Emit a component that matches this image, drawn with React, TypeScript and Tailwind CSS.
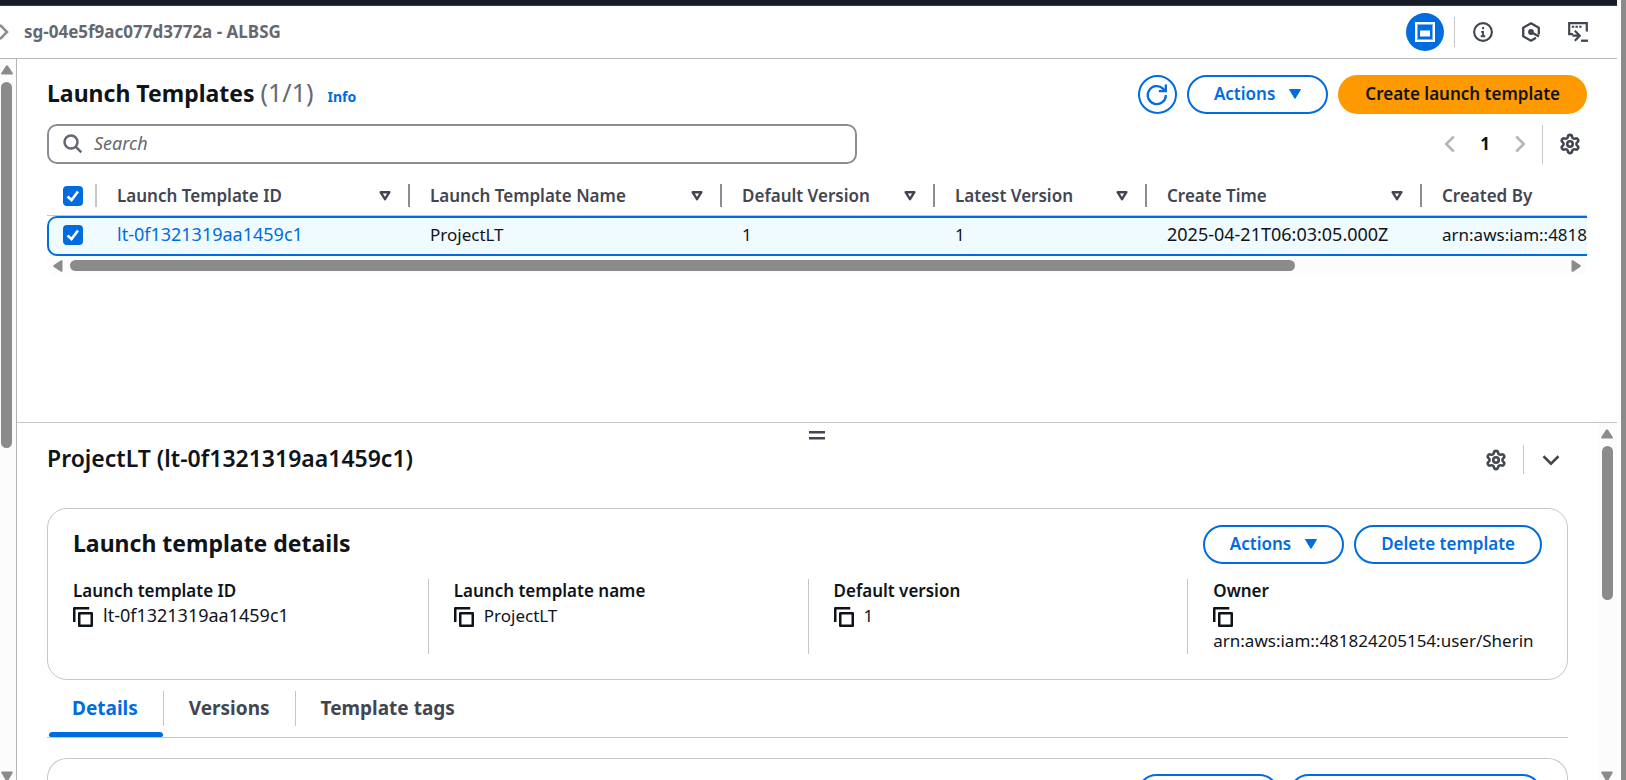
import type { ReactNode } from 'react';
import { Settings } from 'lucide-react';

function Caret() {
  return (
    <svg width="12" height="10" viewBox="0 0 12 10" aria-hidden="true">
      <path d="M0.5 0.5h11L6 9.5z" fill="currentColor" stroke="currentColor" strokeLinejoin="round" />
    </svg>
  );
}

function SortIcon() {
  return (
    <svg width="12" height="10" viewBox="0 0 12 10" fill="none" aria-hidden="true">
      <path d="M1.6 1.2h8.8L6 8.2z" stroke="#424650" strokeWidth="2.4" strokeLinejoin="round" />
    </svg>
  );
}

function CopyIcon() {
  return (
    <svg width="20" height="20" viewBox="0 0 16 16" fill="none" stroke="#0f141a" strokeWidth="2" aria-hidden="true">
      <path d="M1 12V1h12" strokeLinejoin="round" />
      <rect x="5" y="5" width="10" height="10" strokeLinejoin="round" />
    </svg>
  );
}

function Chevron({ d }: { d: string }) {
  return (
    <svg width="20" height="20" viewBox="0 0 16 16" fill="none" stroke="currentColor" strokeWidth="2" aria-hidden="true">
      <path d={d} />
    </svg>
  );
}

function GearButton({ label }: { label: string }) {
  return (
    <button aria-label={label} className="text-[#424650]">
      <Settings size={22} strokeWidth={2.8} />
    </button>
  );
}

function PillButton({ children }: { children: ReactNode }) {
  return (
    <button className="flex h-[39px] items-center gap-[14px] rounded-full border-2 border-[#006ce0] bg-white px-[25px] pb-[2px] text-[17px] font-semibold whitespace-nowrap text-[#006ce0]">
      {children}
    </button>
  );
}

function Checkbox({ label }: { label: string }) {
  return (
    <label className="grid size-5">
      <input
        type="checkbox"
        defaultChecked
        aria-label={label}
        className="col-start-1 row-start-1 size-5 appearance-none rounded-[4px] bg-[#006ce0]"
      />
      <svg className="pointer-events-none col-start-1 row-start-1" width="20" height="20" viewBox="0 0 20 20" fill="none" aria-hidden="true">
        <path d="M4.5 10.5l4 3.5L15 5.5" stroke="#fff" strokeWidth="2.6" />
      </svg>
    </label>
  );
}

function VerticalScrollbar({ thumb, className }: { thumb: string; className: string }) {
  return (
    <div aria-hidden="true" className={`flex shrink-0 flex-col items-center bg-[#fcfcfc] pt-[6px] ${className}`}>
      <svg width="12" height="10" viewBox="0 0 12 10" fill="#8b8b8b" className="shrink-0">
        <path d="M5 .8q1-1.2 2 0L11.7 8q.5 1.5-1 1.5H1.3Q-.2 9.5 .3 8z" />
      </svg>
      <div className={`mt-[7px] w-[11px] shrink-0 rounded-full bg-[#8b8b8b] ${thumb}`} />
      <svg width="12" height="9" viewBox="0 0 12 9" fill="#8b8b8b" className="mt-auto shrink-0">
        <path d="M.3 1.8Q0 .5 1.3 .5h9.4q1.3 0 1 1.3L7.5 9h-3z" />
      </svg>
    </div>
  );
}

const columns = [
  { name: 'Launch Template ID', width: 'w-[313px]' },
  { name: 'Launch Template Name', width: 'w-[312px]' },
  { name: 'Default Version', width: 'w-[213px]' },
  { name: 'Latest Version', width: 'w-[212px]' },
  { name: 'Create Time', width: 'w-[275px]' },
  { name: 'Created By', width: 'w-[504px]' },
];

const cell = 'border-y-2 border-[#006ce0] bg-[#f0fbff] pb-[3px] pl-5 text-left whitespace-nowrap';

function TemplatesTable() {
  return (
    <div className="mt-3 overflow-hidden">
      <table className="w-[1879px] table-fixed border-separate border-spacing-0 text-[17px]">
        <thead>
          <tr className="h-10 text-[#424650]">
            <th className="w-[50px] border-b border-[#c6c6cd] p-0">
              <div className="flex items-center justify-between pl-4">
                <Checkbox label="Select all launch templates" />
                <span className="h-[23px] w-[2px] bg-[#c6c6cd]" />
              </div>
            </th>
            {columns.map((c) => (
              <th key={c.name} className={`border-b border-[#c6c6cd] p-0 font-semibold ${c.width}`}>
                <div className="flex items-center pl-5">
                  <span className="flex-1 text-left">{c.name}</span>
                  <SortIcon />
                  <span className="ml-[17px] h-[23px] w-[2px] bg-[#8c8c94]" />
                </div>
              </th>
            ))}
          </tr>
        </thead>
        <tbody>
          <tr className="h-10">
            <td className="rounded-l-[10px] border-y-2 border-l-2 border-[#006ce0] bg-[#f0fbff] p-0 pb-[2px] pl-[14px]">
              <Checkbox label="Select ProjectLT" />
            </td>
            <td className={`${cell} text-[18px]`}>
              <a href="#lt-0f1321319aa1459c1" className="text-[#006ce0]">lt-0f1321319aa1459c1</a>
            </td>
            <td className={cell}>ProjectLT</td>
            <td className={cell}>1</td>
            <td className={cell}>1</td>
            <td className={`${cell} text-[18px]`}>2025-04-21T06:03:05.000Z</td>
            <td className={cell}>arn:aws:iam::481824205154:user/Sherin</td>
          </tr>
        </tbody>
      </table>
      <div aria-hidden="true" className="flex h-[19px] items-center rounded-b-[10px] bg-[#fcfcfc] px-[6px]">
        <svg width="10" height="12" viewBox="0 0 10 12" fill="#8b8b8b">
          <path d="M.8 5q-1.2 1 0 2L8 11.7q1.5.5 1.5-1V1.3Q9.5-.2 8 .3z" />
        </svg>
        <div className="mx-[7px] flex-1">
          <div className="h-[11px] w-[82%] rounded-full bg-[#8b8b8b]" />
        </div>
        <svg width="10" height="12" viewBox="0 0 10 12" fill="#8b8b8b">
          <path d="M9.2 5q1.2 1 0 2L2 11.7q-1.5.5-1.5-1V1.3Q.5-.2 2 .3z" />
        </svg>
      </div>
    </div>
  );
}

function Breadcrumbs() {
  return (
    <header className="flex h-[53px] shrink-0 items-center justify-between border-b border-[#b4b4bb] pr-[29px]">
      <div className="flex items-center gap-[10px] text-[17px] font-bold text-[#656871]">
        <svg width="14" height="20" viewBox="0 0 14 20" fill="none" stroke="#8c8c94" strokeWidth="2.5" aria-hidden="true">
          <path d="M0 3l7 7-7 7" />
        </svg>
        <span>sg-04e5f9ac077d3772a - ALBSG</span>
      </div>
      <div className="flex items-center text-[#424650]">
        <button aria-label="Split panel" className="grid size-[38px] place-items-center rounded-full bg-[#006ce0]">
          <svg width="20" height="20" viewBox="0 0 20 20" fill="none" aria-hidden="true">
            <rect x="1" y="1" width="18" height="18" stroke="#fff" strokeWidth="2" />
            <rect x="2.5" y="2.5" width="15" height="15" stroke="#7db5f3" />
            <rect x="5" y="8.5" width="10" height="6" fill="#fff" />
          </svg>
        </button>
        <span className="ml-[10px] h-[30px] w-px bg-[#c6c6cd]" />
        <button aria-label="Info panel" className="ml-[18px]">
          <svg width="20" height="20" viewBox="0 0 16 16" fill="none" stroke="currentColor" aria-hidden="true">
            <circle cx="8" cy="8" r="7.1" strokeWidth="1.7" />
            <path d="M8 4v1.7M8 7.2V12M6.5 7.9H8M6.2 11.4h3.6" strokeWidth="1.5" />
          </svg>
        </button>
        <button aria-label="Diagnostics" className="ml-7">
          <svg width="20" height="20" viewBox="0 0 20 20" fill="none" stroke="currentColor" aria-hidden="true">
            <path d="M17.800 12.500V5.700L10 1.300 2.200 5.700v8.600L10 18.700l5-2.900" strokeWidth="2.300" strokeLinejoin="round" />
            <circle cx="10" cy="10" r="2.900" fill="currentColor" stroke="none" />
            <path d="M10 10l8 4.600" strokeWidth="2.300" />
          </svg>
        </button>
        <button aria-label="CloudShell" className="ml-[27px]">
          <svg width="20" height="20" viewBox="0 0 20 20" fill="none" stroke="currentColor" aria-hidden="true">
            <path d="M18.800 9.500V1.200H1.200v11H5M4.500 13.700h7M6.800 8.700l4.900 5-4.900 5" strokeWidth="2.200" />
            <path d="M3.800 4.800h2.400M7.500 4.800h2.400M11.200 4.800h2.400" strokeWidth="2" />
            <path d="M13 18.700h7" strokeWidth="2.300" />
          </svg>
        </button>
      </div>
    </header>
  );
}

function Field({ label, value, size, first }: { label: string; value: string; size: string; first?: boolean }) {
  return (
    <div className={`min-h-[75px] px-[25px] ${first ? '' : 'border-l border-[#c6c6cd]'}`}>
      <dt className="text-[17px] leading-6 font-semibold">{label}</dt>
      <dd className={`flex flex-wrap items-center gap-x-[10px] leading-[25px] ${size}`}>
        <button aria-label={`Copy ${label}`} className="flex h-[25px] items-center pt-[3px]">
          <CopyIcon />
        </button>
        <span>{value}</span>
      </dd>
    </div>
  );
}

const tabs = ['Details', 'Versions', 'Template tags'];

function DetailsPanel() {
  return (
    <section className="flex min-h-0 flex-1">
      <div className="min-w-0 flex-1 overflow-hidden pl-[30px]">
        <div className="flex h-[18px] justify-center pt-2">
          <svg width="16" height="10" viewBox="0 0 16 10" aria-label="Resize panel" className="mr-[11px]">
            <path d="M0 1.300h16M0 7.300h16" stroke="#424650" strokeWidth="2.400" />
          </svg>
        </div>
        <div className="flex h-[37px] items-center justify-between pr-[37px]">
          <h2 className="pb-[2px] text-[23px] font-semibold">ProjectLT (lt-0f1321319aa1459c1)</h2>
          <div className="flex items-center text-[#424650]">
            <GearButton label="Panel preferences" />
            <span className="ml-4 h-[29px] w-px bg-[#c6c6cd]" />
            <button aria-label="Close panel" className="ml-[17px]">
              <Chevron d="M2 5l6 6 6-6" />
            </button>
          </div>
        </div>
        <div className="mt-[30px] mr-[30px]">
          <div className="rounded-[20px] border border-[#c6c6cd] pt-4 pb-[25px]">
            <div className="flex items-center justify-between px-[25px]">
              <h3 className="pb-[3px] text-[23px] font-bold">Launch template details</h3>
              <div className="flex gap-[10px]">
                <PillButton>Actions <Caret /></PillButton>
                <PillButton>Delete template</PillButton>
              </div>
            </div>
            <dl className="mt-[15px] grid grid-cols-4">
              <Field first label="Launch template ID" value="lt-0f1321319aa1459c1" size="text-[18px]" />
              <Field label="Launch template name" value="ProjectLT" size="text-[17px]" />
              <Field label="Default version" value="1" size="text-[17px]" />
              <Field label="Owner" value="arn:aws:iam::481824205154:user/Sherin" size="text-[17px]" />
            </dl>
          </div>
          <div role="tablist" className="flex border-b border-[#c6c6cd] pt-[11px] text-[19px] font-bold text-[#424650]">
            {tabs.map((t, i) => (
              <button key={t} role="tab" aria-selected={i === 0} className={i === 0 ? 'text-[#006ce0]' : ''}>
                <span className={`flex h-[35px] items-center px-[25px] pb-px ${i < 2 ? 'border-r border-[#c6c6cd]' : ''}`}>{t}</span>
                <span className={`mt-[6px] mr-px ml-[2px] block h-[5px] rounded-t-[4px] rounded-b-[2px] ${i === 0 ? 'bg-[#006ce0]' : ''}`} />
              </button>
            ))}
          </div>
          <div className="mt-5 flex justify-end gap-[10px] rounded-t-[20px] border border-b-0 border-[#c6c6cd] px-[25px] pt-[15px]">
            <PillButton>Actions <Caret /></PillButton>
            <PillButton>Delete template version</PillButton>
          </div>
        </div>
      </div>
      <VerticalScrollbar className="w-[19px] pr-px" thumb="h-[154px]" />
    </section>
  );
}

export default function App() {
  return (
    <div className="flex h-screen overflow-hidden bg-white font-['Noto_Sans','Open_Sans',sans-serif] text-[#0f141a]">
      <div className="flex min-w-0 flex-1 flex-col">
        <div className="h-[6px] shrink-0 border-b border-[#413b4d] bg-[#161d26]" />
        <Breadcrumbs />
        <div className="flex min-h-0 flex-1">
          <VerticalScrollbar className="w-[17px] border-r border-[#b4b4bb] pr-[3px]" thumb="h-[366px]" />
          <main className="flex min-w-0 flex-1 flex-col">
            <section className="h-[364px] shrink-0 border-b border-[#c6c6cd] px-[30px] pt-4">
              <div className="flex h-[39px] items-center justify-between">
                <div className="flex items-baseline pb-[3px]">
                  <h1 className="text-[23px] font-bold">
                    Launch Templates <span className="text-[25px] leading-none font-normal text-[#656871]">(1/1)</span>
                  </h1>
                  <a href="#info" className="ml-[14px] text-[14px] font-bold text-[#006ce0]">Info</a>
                </div>
                <div className="flex gap-[10px]">
                  <button aria-label="Refresh" className="grid size-[39px] place-items-center rounded-full border-2 border-[#006ce0] text-[#006ce0]">
                    <svg width="22" height="22" viewBox="0 0 22 22" fill="none" stroke="currentColor" strokeWidth="2.300" aria-hidden="true">
                      <path d="M19.800 11a9 9 0 1 1-2.800-6.400l2.200 2.400" />
                      <path d="M19.800 .6v6.500h-7" />
                    </svg>
                  </button>
                  <PillButton>Actions <Caret /></PillButton>
                  <button className="h-[39px] rounded-full bg-[#ff9900] px-[27px] pb-[2px] text-[17px] font-semibold whitespace-nowrap">
                    Create launch template
                  </button>
                </div>
              </div>
              <div className="mt-[10px] flex items-center justify-between">
                <label className="flex h-10 w-[53%] max-w-[810px] items-center gap-[11px] rounded-[10px] border-2 border-[#8c8c94] pl-[14px]">
                  <svg width="20" height="20" viewBox="0 0 20 20" fill="none" stroke="#656871" strokeWidth="2.500" aria-hidden="true">
                    <circle cx="8" cy="8" r="6.500" />
                    <path d="M12.800 12.800l5.500 5.500" />
                  </svg>
                  <input
                    type="search"
                    aria-label="Search launch templates"
                    placeholder="Search"
                    className="min-w-0 flex-1 bg-transparent pb-px text-[18px] outline-none placeholder:text-[#656871] placeholder:italic"
                  />
                </label>
                <div className="flex items-center pr-[6px] text-[#b4b4bb]">
                  <button aria-label="Previous page">
                    <Chevron d="M11 2L5 8l6 6" />
                  </button>
                  <button className="w-[50px] text-[17px] font-bold text-[#0f141a]">1</button>
                  <button aria-label="Next page">
                    <Chevron d="M5 2l6 6-6 6" />
                  </button>
                  <span className="mr-4 ml-3 h-[39px] w-px bg-[#c6c6cd]" />
                  <GearButton label="Preferences" />
                </div>
              </div>
              <TemplatesTable />
            </section>
            <DetailsPanel />
          </main>
        </div>
      </div>
      <div aria-hidden="true" className="w-[9px] shrink-0 border-l-4 border-[#fcfcfc] bg-[#8b8b8b]" />
    </div>
  );
}
